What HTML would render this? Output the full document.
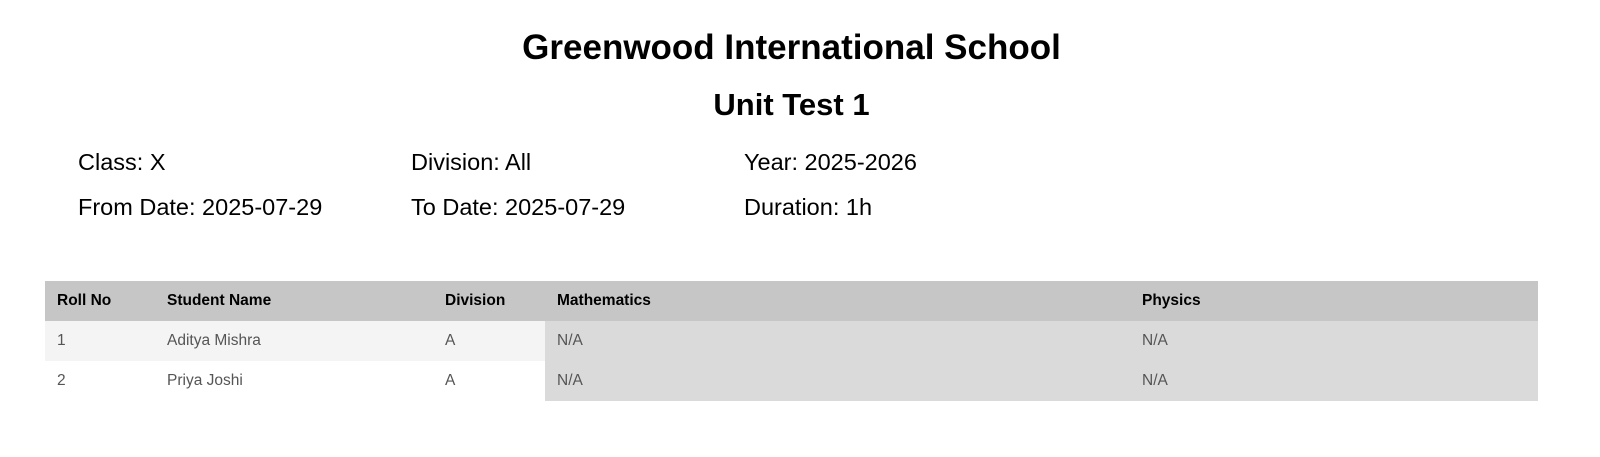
<!DOCTYPE html>
<html><head><meta charset="utf-8"><style>
body{margin:0;width:1600px;height:457px;background:#fff;font-family:"Liberation Sans",Arial,sans-serif;position:relative;overflow:hidden}
.t{position:absolute;left:0;width:1583px;text-align:center;font-weight:bold;color:#000}
.i{position:absolute;font-size:23.5px;color:#000;white-space:nowrap}
table{position:absolute;left:45px;top:281px;width:1493px;border-collapse:collapse;font-size:15.5px}
td,th{padding:0 0 0 12px;text-align:left;height:40px}
th{background:#c6c6c6;font-weight:bold;color:#000;height:40px}
td{color:#555}
tr.a td.n{background:#f4f4f4}
td.s{background:#dadada}
</style></head><body>
<div class="t" style="top:28px;font-size:35px">Greenwood International School</div>
<div class="t" style="top:87px;font-size:31px">Unit Test 1</div>
<div class="i" style="left:78px;top:149px">Class: X</div>
<div class="i" style="left:411px;top:149px">Division: All</div>
<div class="i" style="left:744px;top:149px">Year: 2025-2026</div>
<div class="i" style="left:78px;top:194px">From Date: 2025-07-29</div>
<div class="i" style="left:411px;top:194px">To Date: 2025-07-29</div>
<div class="i" style="left:744px;top:194px">Duration: 1h</div>
<table>
<tr><th style="width:98px">Roll No</th><th style="width:266px">Student Name</th><th style="width:100px">Division</th><th style="width:573px">Mathematics</th><th>Physics</th></tr>
<tr class="a"><td class="n">1</td><td class="n">Aditya Mishra</td><td class="n">A</td><td class="s">N/A</td><td class="s">N/A</td></tr>
<tr><td>2</td><td>Priya Joshi</td><td>A</td><td class="s">N/A</td><td class="s">N/A</td></tr>
</table>
</body></html>
